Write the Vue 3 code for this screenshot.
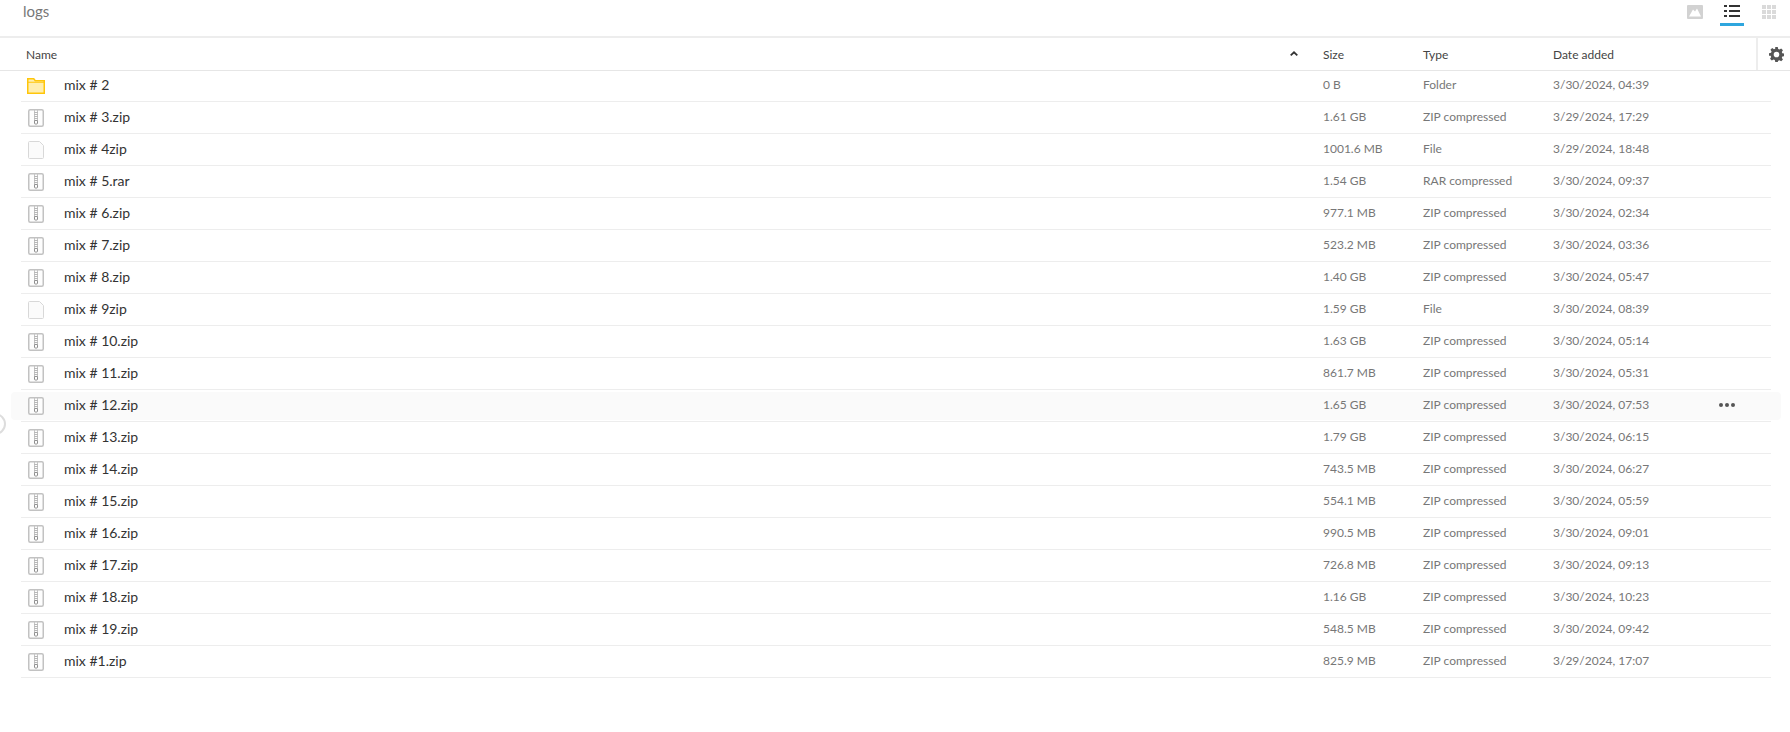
<template>
  <div class="files">
    <div class="toolbar">
      <span class="crumb">logs</span>
      <div class="views">
        <button class="view">
          <svg width="16" height="14" viewBox="0 0 16 14"><rect width="16" height="14" rx="1" fill="#d2d2d2" /><path d="M2 11.5 L6 4.5 L8 6.5 L10 3.5 L14 11.5 Z" fill="#fff" /></svg>
        </button>
        <button class="view active">
          <svg width="16" height="13" viewBox="0 0 16 13" fill="#333"><rect y="0" width="3" height="2" /><rect x="5" y="0" width="11" height="2" /><rect y="5" width="3" height="2" /><rect x="5" y="5" width="11" height="2" /><rect y="10" width="3" height="2" /><rect x="5" y="10" width="11" height="2" /></svg>
        </button>
        <button class="view">
          <svg width="14" height="14" viewBox="0 0 14 14" fill="#dadada"><rect width="4" height="4" /><rect x="5" width="4" height="4" /><rect x="10" width="4" height="4" /><rect y="5" width="4" height="4" /><rect x="5" y="5" width="4" height="4" /><rect x="10" y="5" width="4" height="4" /><rect y="10" width="4" height="4" /><rect x="5" y="10" width="4" height="4" /><rect x="10" y="10" width="4" height="4" /></svg>
        </button>
      </div>
    </div>

    <div class="head">
      <div class="col-name head-name">
        <span>Name</span>
        <svg class="sort" width="8" height="5" viewBox="0 0 8 5"><path d="M.7 4.300 L4 1.300 L7.300 4.300" fill="none" stroke="#333" stroke-width="1.800" /></svg>
      </div>
      <div class="col-size">Size</div>
      <div class="col-type">Type</div>
      <div class="col-date">Date added</div>
      <div class="settings">
        <svg width="15" height="15" viewBox="0 0 24 24"><path fill="#555" fill-rule="evenodd" d="M10 0h4l.7 3.300 2 .8 2.800-1.800 2.800 2.800-1.800 2.800.8 2 3.300.7v4l-3.300.7-.8 2 1.800 2.800-2.800 2.800-2.800-1.800-2 .8L14 24h-4l-.7-3.300-2-.8-2.800 1.800-2.800-2.800 1.800-2.800-.8-2L0 14v-4l3.300-.7.8-2-1.800-2.800 2.800-2.800 2.800 1.800 2-.8zM12 7.500a4.500 4.500 0 1 0 0 9 4.500 4.500 0 0 0 0-9z" /></svg>
      </div>
    </div>

    <div class="list">
      <div v-for="file in files" :key="file.name" class="row" :class="{ hovered: file.hovered }">
        <div class="col-name cell-name">
          <svg v-if="file.kind === 'folder'" class="icon folder-icon" width="18" height="16" viewBox="0 0 18 16">
            <path d="M.75.75h6l1.500 2h9v12.500H.75z" fill="#ffeeb0" stroke="#ffc60a" stroke-width="1.500" />
            <path d="M.75 4.250h16.500" stroke="#ffc60a" fill="none" />
          </svg>
          <svg v-else-if="file.kind === 'zip'" class="icon file-icon" width="16" height="18" viewBox="0 0 16 18">
            <rect x=".75" y=".75" width="14.500" height="16.500" rx="1.500" fill="#fdfdfd" stroke="#c2c2c2" stroke-width="1.500" />
            <path d="M6.500 1v12M9.500 1v12" stroke="#c4c4c4" fill="none" />
            <path d="M6 3.500h4M6 5.500h4M6 7.500h4M6 9.500h4M6 11.500h4" stroke="#b8b8b8" fill="none" />
            <rect x="6.500" y="11.500" width="3" height="3.500" rx=".8" fill="none" stroke="#8c8c8c" />
          </svg>
          <svg v-else class="icon file-icon" width="16" height="18" viewBox="0 0 16 18">
            <path d="M1.500.5h10l4 4v12a1 1 0 0 1-1 1h-13a1 1 0 0 1-1-1v-15a1 1 0 0 1 1-1z" fill="#fbfbfb" stroke="#d8d8d8" />
          </svg>
          <span>{{ file.name }}</span>
        </div>
        <div class="col-size">{{ file.size }}</div>
        <div class="col-type">{{ file.type }}</div>
        <div class="col-date">{{ file.date }}</div>
        <div v-if="file.hovered" class="more"><i></i><i></i><i></i></div>
      </div>
    </div>

    <span class="sidebar-toggle"></span>
  </div>
</template>

<script setup>
const zip = "ZIP compressed";

const files = [
  { name: "mix # 2", kind: "folder", size: "0 B", type: "Folder", date: "3/30/2024, 04:39" },
  { name: "mix # 3.zip", kind: "zip", size: "1.61 GB", type: zip, date: "3/29/2024, 17:29" },
  { name: "mix # 4zip", kind: "file", size: "1001.6 MB", type: "File", date: "3/29/2024, 18:48" },
  { name: "mix # 5.rar", kind: "zip", size: "1.54 GB", type: "RAR compressed", date: "3/30/2024, 09:37" },
  { name: "mix # 6.zip", kind: "zip", size: "977.1 MB", type: zip, date: "3/30/2024, 02:34" },
  { name: "mix # 7.zip", kind: "zip", size: "523.2 MB", type: zip, date: "3/30/2024, 03:36" },
  { name: "mix # 8.zip", kind: "zip", size: "1.40 GB", type: zip, date: "3/30/2024, 05:47" },
  { name: "mix # 9zip", kind: "file", size: "1.59 GB", type: "File", date: "3/30/2024, 08:39" },
  { name: "mix # 10.zip", kind: "zip", size: "1.63 GB", type: zip, date: "3/30/2024, 05:14" },
  { name: "mix # 11.zip", kind: "zip", size: "861.7 MB", type: zip, date: "3/30/2024, 05:31" },
  { name: "mix # 12.zip", kind: "zip", size: "1.65 GB", type: zip, date: "3/30/2024, 07:53", hovered: true },
  { name: "mix # 13.zip", kind: "zip", size: "1.79 GB", type: zip, date: "3/30/2024, 06:15" },
  { name: "mix # 14.zip", kind: "zip", size: "743.5 MB", type: zip, date: "3/30/2024, 06:27" },
  { name: "mix # 15.zip", kind: "zip", size: "554.1 MB", type: zip, date: "3/30/2024, 05:59" },
  { name: "mix # 16.zip", kind: "zip", size: "990.5 MB", type: zip, date: "3/30/2024, 09:01" },
  { name: "mix # 17.zip", kind: "zip", size: "726.8 MB", type: zip, date: "3/30/2024, 09:13" },
  { name: "mix # 18.zip", kind: "zip", size: "1.16 GB", type: zip, date: "3/30/2024, 10:23" },
  { name: "mix # 19.zip", kind: "zip", size: "548.5 MB", type: zip, date: "3/30/2024, 09:42" },
  { name: "mix #1.zip", kind: "zip", size: "825.9 MB", type: zip, date: "3/29/2024, 17:07" },
];
</script>

<style>
body {
  background: #fff;
  overflow: hidden;
}
</style>

<style scoped>
.files {
  position: relative;
  width: 1790px;
  height: 732px;
  font-family: Lato, "Liberation Sans", sans-serif;
  color: #222;
  overflow: hidden;
}

.toolbar {
  display: flex;
  justify-content: space-between;
  height: 36px;
  padding-left: 23px;
  border-bottom: 2px solid #ededed;
}

.crumb {
  font-size: 15px;
  line-height: 22px;
  color: #777;
}

.views {
  display: flex;
  padding-right: 9px;
}

.view {
  display: flex;
  justify-content: center;
  width: 24px;
  height: 26px;
  margin-left: 13px;
  padding: 5px 0 0;
  border: 0;
  border-bottom: 3px solid transparent;
  background: none;
}

.view.active {
  border-bottom-color: #2ea6de;
}

.head {
  display: flex;
  align-items: center;
  height: 31px;
  padding: 1px 0 0 26px;
  border-bottom: 1px solid #e6e6e6;
  font-size: 12px;
  color: #444;
}

.head-name {
  justify-content: space-between;
  width: 1297px;
  padding-right: 25px;
}

.sort {
  margin-top: -3px;
}

.settings {
  position: absolute;
  top: 38px;
  left: 1756px;
  display: flex;
  align-items: center;
  justify-content: center;
  width: 34px;
  height: 32px;
  padding-left: 4px;
  border-left: 2px solid #ededed;
  box-sizing: border-box;
}

.col-name {
  display: flex;
  align-items: center;
  box-sizing: border-box;
}

.col-size {
  width: 100px;
}

.col-type {
  width: 130px;
}

.list {
  margin: -1px 19px 0 21px;
}

.row {
  position: relative;
  display: flex;
  align-items: center;
  height: 29px;
  padding-bottom: 2px;
  border-bottom: 1px solid #ededed;
  font-size: 12px;
  color: #777;
}

.row.hovered::before {
  content: "";
  position: absolute;
  inset: 2px -10px 1px;
  border-radius: 4px;
  background: #fafafa;
}

.row > * {
  position: relative;
}

.cell-name {
  width: 1302px;
  padding-left: 7px;
  font-size: 14px;
  color: #333;
}

.icon {
  flex: none;
  margin-top: 2px;
}

.folder-icon {
  margin-left: -1px;
  margin-right: 19px;
}

.file-icon {
  margin-right: 20px;
}

.more {
  position: absolute;
  left: 1698px;
  display: flex;
  gap: 2px;
}

.more i {
  width: 4px;
  height: 4px;
  border-radius: 50%;
  background: #555;
}

.sidebar-toggle {
  position: absolute;
  top: 413px;
  left: -16px;
  width: 18px;
  height: 18px;
  border: 2px solid #ddd;
  border-radius: 50%;
}
</style>
